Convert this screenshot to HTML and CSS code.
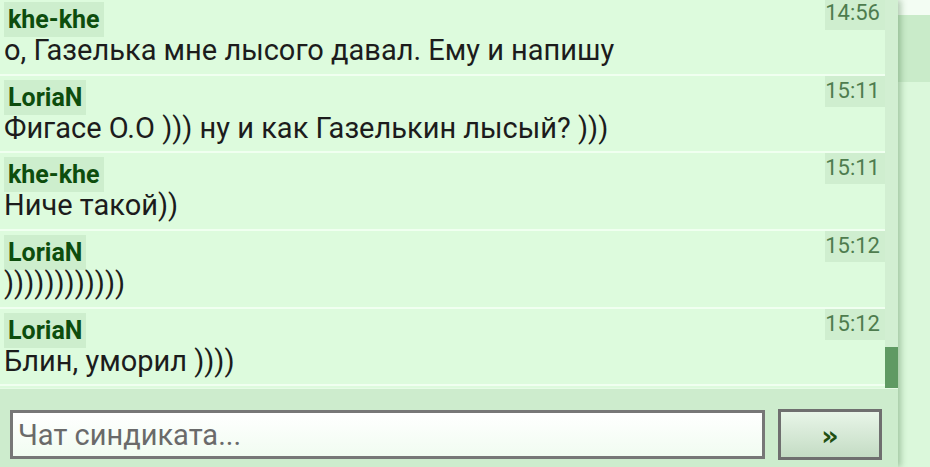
FILE: index.html
```html
<!DOCTYPE html>
<html lang="ru">
<head>
<meta charset="utf-8">
<link rel="stylesheet" href="styles.css">
</head>
<body>
<div class="page">
  <div class="panel">
    <div class="log">
      <div class="list">
        <div class="msg">
          <div class="head"><span class="name">khe-khe</span><span class="time">14:56</span></div>
          <div class="text">о, Газелька мне лысого давал. Ему и напишу</div>
        </div>
        <div class="msg">
          <div class="head"><span class="name">LoriaN</span><span class="time">15:11</span></div>
          <div class="text">Фигасе O.O ))) ну и как Газелькин лысый? )))</div>
        </div>
        <div class="msg">
          <div class="head"><span class="name">khe-khe</span><span class="time">15:11</span></div>
          <div class="text">Ниче такой))</div>
        </div>
        <div class="msg">
          <div class="head"><span class="name">LoriaN</span><span class="time">15:12</span></div>
          <div class="text">))))))))))))</div>
        </div>
        <div class="msg">
          <div class="head"><span class="name">LoriaN</span><span class="time">15:12</span></div>
          <div class="text">Блин, уморил ))))</div>
        </div>
      </div>
      <div class="scrollbar"><div class="thumb"></div></div>
    </div>
    <div class="composer">
      <input class="input" type="text" placeholder="Чат синдиката...">
      <button class="send">»</button>
    </div>
  </div>
  <div class="side">
    <div class="side-top"></div>
    <div class="side-band"></div>
    <div class="side-rest"></div>
  </div>
</div>
</body>
</html>
```
FILE: styles.css
```css
* { box-sizing: border-box; }
html, body { margin: 0; padding: 0; }
body {
  width: 930px;
  height: 467px;
  overflow: hidden;
  font-family: Roboto, "Noto Sans", sans-serif;
  background: #daf8da;
}
.page {
  display: flex;
  height: 467px;
}
.panel {
  width: 898px;
  flex: none;
  display: flex;
  flex-direction: column;
  background: #cdeccd;
  box-shadow: 3px 0 6px rgba(60, 110, 60, 0.35);
  position: relative;
  z-index: 1;
}
.log {
  height: 388px;
  display: flex;
  overflow: hidden;
  background: #ddfbdd;
}
.list {
  width: 885px;
  margin-top: -2px;
}
.msg {
  border-bottom: 2.5px solid #f0fff0;
  height: 77.7px;
  padding-left: 4px;
}
.head {
  display: flex;
  justify-content: space-between;
  align-items: flex-start;
}
.name {
  margin-top: 4px;
  height: 35px;
  line-height: 35px;
  padding: 0 4px;
  background: #cdeecd;
  color: #0d4d0d;
  font-weight: 700;
  font-size: 25px;
}
.time {
  width: 60px;
  height: 31px;
  line-height: 29px;
  text-align: right;
  padding-right: 5px;
  background: #cfeecf;
  color: #4e7c4e;
  font-size: 22px;
}
.msg:first-child .time { margin-top: 2px; height: 30px; line-height: 26px; }
.text {
  font-size: 29px;
  line-height: 34px;
  margin-top: -4px;
  color: #1c1c1c;
}
.scrollbar {
  width: 13px;
  flex: none;
  background: #d2efd2;
  display: flex;
  flex-direction: column;
  justify-content: flex-end;
}
.thumb {
  height: 41px;
  background: #5f9a63;
}
.composer {
  flex: 1;
  display: flex;
  align-items: flex-start;
  padding: 20px 16px 0 10px;
  gap: 13px;
  border-top: 1px solid #e6fbe6;
}
.input {
  width: 755px;
  height: 49px;
  border: 3px solid #777;
  background: linear-gradient(#ffffff, #f1fcf1);
  font-family: Roboto, sans-serif;
  font-size: 29px;
  padding: 0 5px;
  margin-top: 1px;
  color: #222;
}
.input::placeholder { color: #6a6a6a; }
.send {
  width: 104px;
  height: 51px;
  border: 3px solid #6f6f6f;
  background: linear-gradient(#e8f5e8, #c4dcc4);
  color: #1f4f12;
  font-family: "DejaVu Sans", sans-serif;
  font-weight: 700;
  font-size: 27px;
  padding: 2px 0 0 0;
}
.side {
  flex: 1;
  display: flex;
  flex-direction: column;
}
.side-top { height: 15px; background: #f3fdf3; }
.side-band { height: 67px; background: #c9ebc9; }
.side-rest { flex: 1; background: #dbf8db; }
```
